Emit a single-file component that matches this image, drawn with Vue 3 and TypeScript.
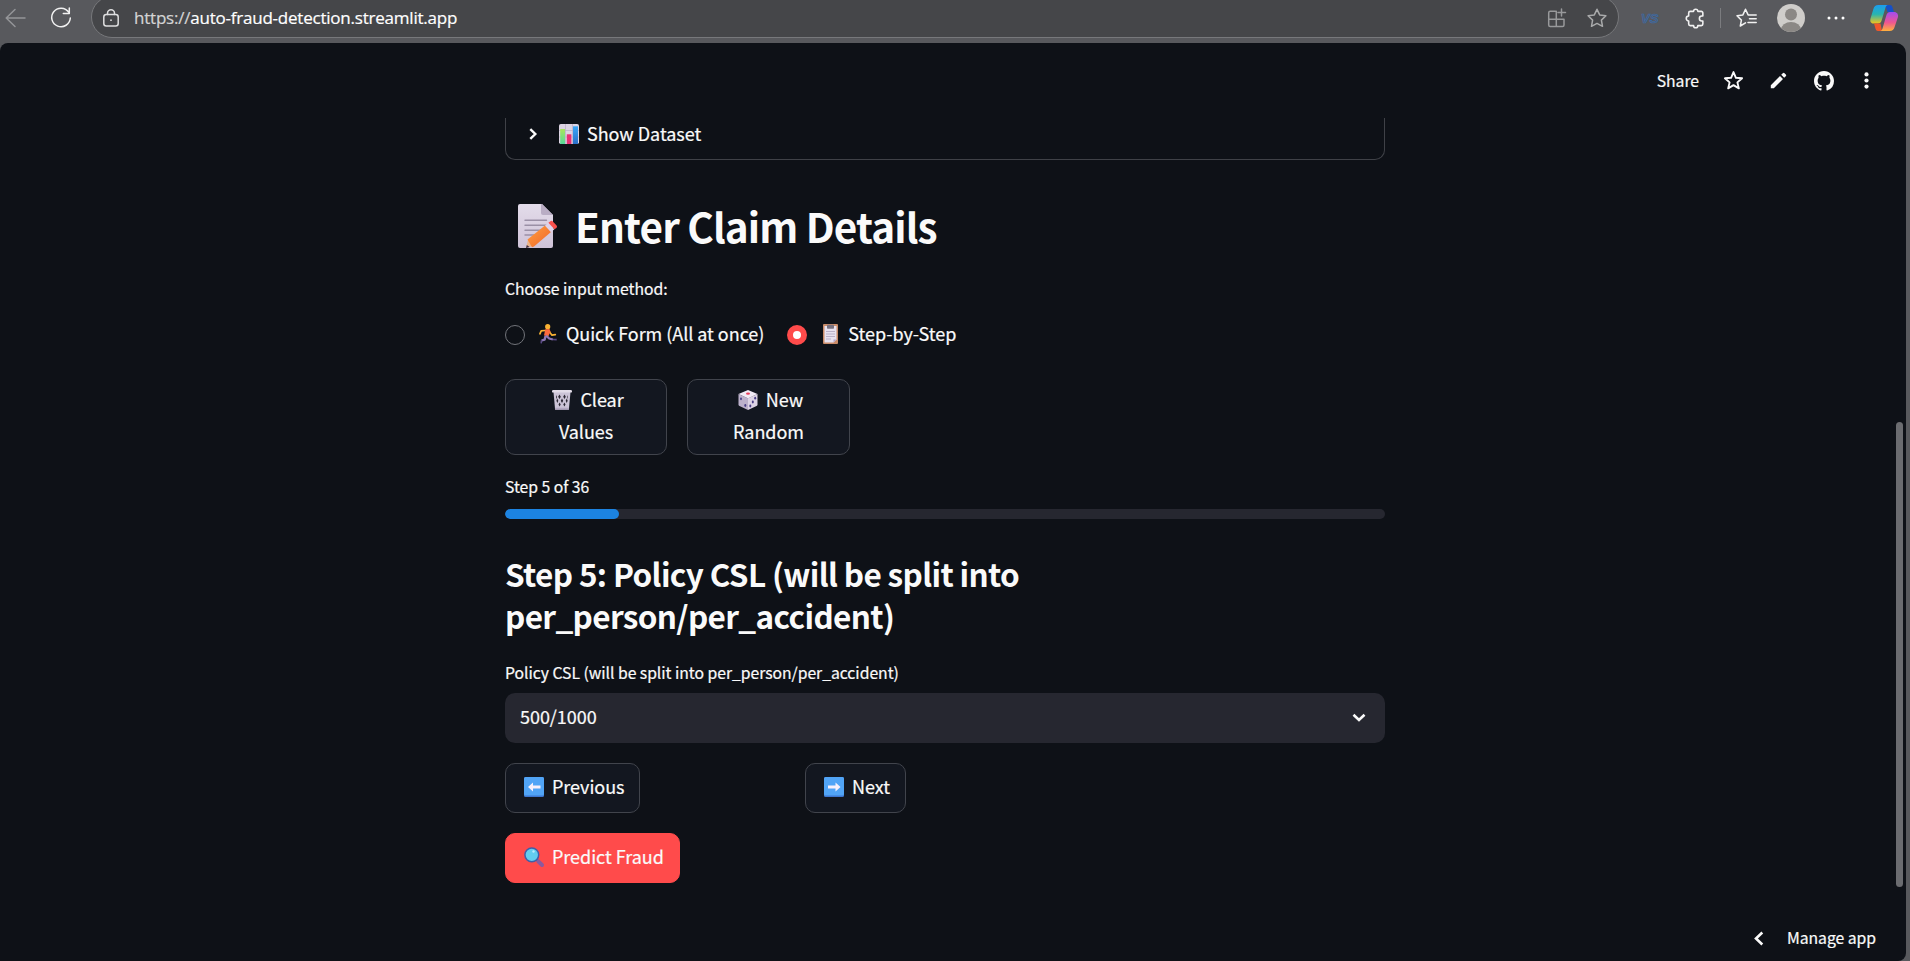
<script setup lang="ts">
import { computed, ref } from 'vue'

const url = 'https://auto-fraud-detection.streamlit.app'
const scheme = url.slice(0, 8)
const host = url.slice(8)

const step = ref(5)
const totalSteps = 36
const fieldLabel = 'Policy CSL (will be split into per_person/per_accident)'
const method = ref<'quick' | 'step'>('step')
const progress = computed(() => `${Math.min(100, step.value * 2.6)}%`)
</script>

<template>
  <div class="browser">
    <div class="toolbar">
      <svg class="back" viewBox="0 0 22 20"><path d="M20 10H1.500M10 1.500 1.200 10 10 18.500" /></svg>
      <svg class="reload" viewBox="0 0 22 22"><path d="M18.700 5.200A9.300 9.300 0 1 0 20.300 11M19.300 1v5.500h-6" /></svg>
      <div class="address">
        <svg class="lock" viewBox="0 0 16 18"><rect x=".8" y="5.500" width="14.400" height="11.500" rx="2.500" /><path d="M4.500 5.500V4.300a3.500 3.500 0 0 1 7 0v1.200" /><circle cx="8" cy="11.200" r=".9" /></svg>
        <span class="url t"><span class="scheme">{{ scheme }}</span>{{ host }}</span>
        <svg class="apps" viewBox="0 0 20 20"><path d="M8.500 3.200H3.200a1.500 1.500 0 0 0-1.500 1.500V17a1.500 1.500 0 0 0 1.500 1.500h12.300A1.500 1.500 0 0 0 17 17v-5.800H1.700M9.300 3.200v15.300M14.500 1v7M11 4.500h7.500" /></svg>
        <svg class="fav" viewBox="0 0 20 20"><path d="m10 1.300 2.700 5.600 6.200.9-4.500 4.300 1.100 6.200-5.500-2.900-5.500 2.900 1.100-6.200L1.100 7.800l6.200-.9z" /></svg>
      </div>
      <span class="vs">VS</span>
      <svg class="puzzle" viewBox="0 0 20 20"><path d="M5 3.200h3.200a2 2 0 0 1 4 0h3.300a1.500 1.500 0 0 1 1.500 1.500v3h-1a2.300 2.300 0 0 0 0 4.600h1v3a1.500 1.500 0 0 1-1.500 1.500h-3.300a2 2 0 0 1-4 0H5a1.500 1.500 0 0 1-1.500-1.500v-3a2.300 2.300 0 0 1 0-4.600v-3A1.500 1.500 0 0 1 5 3.200z" /></svg>
      <i class="rule" />
      <svg class="favs" viewBox="0 0 21 20"><path d="M9.500 14.800 4.300 18l1.100-5.900L1 7.800l5.900-.9L9.500 1.300l2.600 5.600h8.100M13.500 10.800h6.700M12 14.500h8.200" /></svg>
      <svg class="avatar" viewBox="0 0 28 28"><defs><clipPath id="av"><circle cx="14" cy="14" r="14" /></clipPath></defs><g clip-path="url(#av)"><rect width="28" height="28" fill="#cfcdca" /><circle cx="14" cy="10.500" r="6" fill="#8b8885" /><ellipse cx="14" cy="26" rx="10" ry="8" fill="#8b8885" /></g></svg>
      <svg class="more" viewBox="0 0 18 4"><circle cx="2" cy="2" r="1.500" /><circle cx="9" cy="2" r="1.500" /><circle cx="16" cy="2" r="1.500" /></svg>
      <svg class="copilot" viewBox="0 0 28 28">
        <defs>
          <linearGradient id="c1" x1="0" y1="0" x2="0" y2="1"><stop offset="0" stop-color="#1b9df0" /><stop offset=".5" stop-color="#28b5b0" /><stop offset="1" stop-color="#f2c51c" /></linearGradient>
          <linearGradient id="c2" x1="0" y1="0" x2="0" y2="1"><stop offset="0" stop-color="#a24cf0" /><stop offset=".55" stop-color="#ef5692" /><stop offset="1" stop-color="#ffb13c" /></linearGradient>
        </defs>
        <path d="M15 1h5c1.800 0 2.300 1.500 3 4l.9 3h-6.400z" fill="#1550c8" />
        <path d="M8.500 1H18c-1.600 0-2.200 1.500-2.800 3.500l-3.500 11.800c-.7 2.300-1.700 3.200-4 3.200H3.500C.5 19.500-.2 17 .6 14.200L3.400 5C4.200 2.200 5.500 1 8.500 1z" fill="url(#c1)" />
        <path d="M12 27H8c-1.800 0-2.300-1.500-3-4l-1-3.500h6.500z" fill="#f0572a" />
        <path d="M19.500 27H10c1.600 0 2.200-1.500 2.800-3.500l3.500-12c.7-2.300 1.700-3.500 4-3.500H24c3 0 4.700 2.500 3.900 5.300L24.600 23c-.8 2.800-2.100 4-5.100 4z" fill="url(#c2)" />
      </svg>
    </div>

    <div class="page">
      <header class="app-header">
        <span class="share t">Share</span>
        <svg class="h-star" viewBox="0 0 20 20"><path d="m10 2 2.300 5.400 5.900.5-4.500 3.900 1.400 5.700L10 14.400l-5.100 3.100 1.400-5.700-4.500-3.900 5.900-.5z" /></svg>
        <svg class="h-pen" viewBox="0 0 17 17"><path d="M.8 13.200 10 4l3 3-9.200 9.200H.8zM11.200 2.800l1.600-1.600a1.200 1.200 0 0 1 1.700 0l1.300 1.300a1.200 1.200 0 0 1 0 1.700l-1.600 1.600z" /></svg>
        <svg class="h-git" viewBox="0 0 16 16"><path d="M8 0C3.580 0 0 3.580 0 8c0 3.540 2.290 6.530 5.470 7.590.4.070.55-.17.55-.38 0-.19-.01-.82-.01-1.490-2.010.37-2.530-.49-2.690-.94-.09-.23-.48-.94-.82-1.130-.28-.15-.68-.52-.01-.53.63-.01 1.080.58 1.230.82.720 1.210 1.870.87 2.330.66.070-.52.28-.87.510-1.070-1.780-.2-3.640-.89-3.640-3.950 0-.87.310-1.590.82-2.150-.08-.2-.36-1.020.08-2.120 0 0 .67-.21 2.200.82.640-.18 1.320-.27 2-.27s1.360.09 2 .27c1.530-1.040 2.200-.82 2.200-.82.440 1.100.16 1.920.08 2.120.51.56.82 1.270.82 2.150 0 3.070-1.870 3.750-3.650 3.950.29.25.54.73.54 1.480 0 1.070-.01 1.930-.01 2.200 0 .21.150.46.550.38A8.010 8.010 0 0 0 16 8c0-4.420-3.580-8-8-8z" /></svg>
        <svg class="h-dots" viewBox="0 0 5 17"><circle cx="2.500" cy="2.400" r="2.100" /><circle cx="2.500" cy="8.500" r="2.100" /><circle cx="2.500" cy="14.600" r="2.100" /></svg>
      </header>

      <main class="column">
        <div class="expander">
          <svg class="chev-right" viewBox="0 0 8 12"><path d="m1.300 1.200 5 4.800-5 4.800" /></svg>
          <svg class="emoji chart" viewBox="0 0 20 20">
            <defs>
              <linearGradient id="gr" x1="0" y1="0" x2="0" y2="1"><stop offset="0" stop-color="#a8e65a" /><stop offset="1" stop-color="#55d89a" /></linearGradient>
              <linearGradient id="bl" x1="0" y1="0" x2="0" y2="1"><stop offset="0" stop-color="#3aa7f8" /><stop offset="1" stop-color="#2b6fc8" /></linearGradient>
            </defs>
            <rect width="20" height="20" rx="1.800" fill="#dcd4e3" /><path d="M6.500 0v20M13.500 0v20M0 6.500h20M0 13h20" stroke="#b9aec6" stroke-width=".7" />
            <rect x="1.200" y="5" width="4.800" height="15" fill="url(#gr)" /><rect x="7.800" y="10.300" width="4.600" height="9.700" fill="#ea2f74" /><rect x="14" y="2.300" width="5" height="17.700" fill="url(#bl)" />
          </svg>
          <span class="t">Show Dataset</span>
        </div>

        <h2>
          <svg class="emoji memo" viewBox="0 0 40 44">
            <defs>
              <linearGradient id="pg" x1="0" y1="0" x2="0" y2="1"><stop offset="0" stop-color="#e3dcea" /><stop offset="1" stop-color="#cfc3d8" /></linearGradient>
              <linearGradient id="pn" x1="0" y1="0" x2="1" y2="1"><stop offset="0" stop-color="#ffa13f" /><stop offset="1" stop-color="#f0642a" /></linearGradient>
            </defs>
            <path d="M2 0h22l11 11v31a2 2 0 0 1-2 2H2a2 2 0 0 1-2-2V2a2 2 0 0 1 2-2z" fill="url(#pg)" /><path d="M24 0l11 11H25a2 2 0 0 1-2-2V0z" fill="#b9adc4" />
            <path d="M7 16.300h21.500M7 21.200h21.500M7 26.200h18M7 31h10" stroke="#9a90a6" stroke-width="1.400" stroke-linecap="round" />
            <path d="M8 44l2-8.500 6.500 6z" fill="#e9b48c" /><path d="M8 44l.8-3 2.700 2z" fill="#3b2b42" />
            <path d="M9.500 35.500 27 21.500l6 6.500-17 14.500-2 .8z" fill="url(#pn)" /><path d="m27 21.500 3.400-2.700 6 6.500L33 28z" fill="#dfd3ea" /><path d="m30.400 18.800 2-1.500a1.800 1.800 0 0 1 2.400.2l3.800 4a1.700 1.700 0 0 1-.2 2.400l-2 1.400z" fill="#f8504c" />
          </svg>
          <span class="t">Enter Claim Details</span>
        </h2>

        <div class="label method-label"><span class="t">Choose input method:</span></div>
        <div class="radios">
          <label class="radio" @click="method = 'quick'">
            <i class="dot" :class="{ on: method === 'quick' }" />
            <svg class="emoji runner" viewBox="0 0 18 20">
              <circle cx="8.700" cy="2.700" r="2.600" fill="#f9b233" />
              <path d="M6 6.500 2.200 6.800.9 9.800M10.500 8l2.500 3.200 3.300-.5" fill="none" stroke="#f9b233" stroke-width="1.700" stroke-linecap="round" stroke-linejoin="round" />
              <path d="m6.200 5.300 4.300-.2 1 2.500-2.200 5-4.300-1z" fill="#fb6a3c" />
              <path d="m7 11.500 3.200 3 3.700 1M6.500 12l-.8 3.600-3.200.9" fill="none" stroke="#8d78b4" stroke-width="2.300" stroke-linejoin="round" />
              <path d="m2.500 16.300-.3 3M14 15.500l3.700.1" fill="none" stroke="#5a4a86" stroke-width="1.600" />
            </svg>
            <span class="t">Quick Form (All at once)</span>
          </label>
          <label class="radio second" @click="method = 'step'">
            <i class="dot" :class="{ on: method === 'step' }" />
            <svg class="emoji clip" viewBox="0 0 15 20">
              <rect width="15" height="20" rx="1" fill="#c98b68" /><path d="M1.500 2h12v13.500L10.500 18.500h-9z" fill="#e8e2f0" /><path d="M13.500 15.500h-3v3z" fill="#b4a6cb" />
              <path d="M3 7.500h9M3 10h9M3 12.500h9M3 15h5" stroke="#b6abc4" stroke-width=".9" /><rect x="4" y=".7" width="7" height="4" rx=".7" fill="#77717f" />
            </svg>
            <span class="t">Step-by-Step</span>
          </label>
        </div>

        <div class="pair">
          <button class="btn tall">
            <svg class="emoji" viewBox="0 0 20 20">
              <path d="M1.500 2h17l-1.600 17.500H3.100z" fill="#cbc3d6" />
              <path d="m4 5 1 2-1 2.300M7.500 4.500l1.300 2.300-1.300 2.300-1.400-2.300zM12.500 4.500l1.300 2.300-1.300 2.300-1.300-2.300zM16 5l-.8 2 .6 2.300M5.300 8.500l1 2.300-.9 2.200-1-2.200zM10 8.500l1.200 2.300L10 13l-1.200-2.200zM14.700 8.500l1 2.300-1 2.200-1-2.200zM7.600 12.500l1.100 2-1.100 2-1.100-2zM12.400 12.500l1.100 2-1.100 2-1.100-2z" fill="#2b2733" />
              <rect x="0" y="0" width="20" height="2.600" rx="1.200" fill="#e2dce8" /><path d="M2.900 17.700h14.200l-.2 2H3.100z" fill="#b3a8c2" />
            </svg><span class="t">Clear</span><br /><span class="t">Values</span>
          </button>
          <button class="btn tall wide">
            <svg class="emoji" viewBox="0 0 20 20">
              <path d="M10 0l9.500 4L10 8.500.5 4z" fill="#f1eaf5" /><path d="M.5 4 10 8.300V20L1.500 16q-1-.5-1-1.600z" fill="#bcb0cb" /><path d="M19.500 4 10 8.300V20l8.500-4q1-.5 1-1.600z" fill="#ddd3e5" />
              <ellipse cx="10" cy="3.700" rx="2" ry="1.100" fill="#e83f5b" /><g fill="#4a3f86"><ellipse cx="3" cy="8.800" rx="1" ry="1.400" /><ellipse cx="7.300" cy="15.500" rx="1" ry="1.400" /><ellipse cx="17.200" cy="8.200" rx="1" ry="1.400" /><ellipse cx="14.800" cy="12" rx="1" ry="1.400" /><ellipse cx="12.300" cy="16" rx="1" ry="1.400" /></g>
            </svg><span class="t">New</span><br /><span class="t">Random</span>
          </button>
        </div>

        <div class="label step-label"><span class="t">Step {{ step }} of {{ totalSteps }}</span></div>
        <div class="track"><div class="fill" :style="{ width: progress }" /></div>

        <h3><span class="t">Step {{ step }}: Policy CSL (will be split into</span><br /><span class="t">per_person/per_accident)</span></h3>

        <div class="label field-label"><span class="t">{{ fieldLabel }}</span></div>
        <div class="select">
          <span class="t">500/1000</span>
          <svg class="chev-down" viewBox="0 0 14 9"><path d="m1.500 1.700 5.500 5.300 5.500-5.300" /></svg>
        </div>

        <div class="nav">
          <button class="btn prev">
            <svg class="emoji" viewBox="0 0 20 20"><rect width="20" height="20" rx="1.500" fill="#3d77d2" /><rect width="20" height="18.500" rx="1.500" fill="#51a4f6" /><path d="M4 10 9 5.500v3h7.500v3H9v3z" fill="#f7f0fb" /></svg>
            <span class="t">Previous</span>
          </button>
          <button class="btn next">
            <svg class="emoji" viewBox="0 0 20 20"><rect width="20" height="20" rx="1.500" fill="#3d77d2" /><rect width="20" height="18.500" rx="1.500" fill="#51a4f6" /><path d="M16.500 10l-5-4.500v3H4v3h7.500v3z" fill="#f7f0fb" /></svg>
            <span class="t">Next</span>
          </button>
        </div>
        <button class="btn predict">
          <svg class="emoji" viewBox="0 0 20 20"><path d="m12 12 2.500 2.500" stroke="#5a5b9a" stroke-width="2" /><path d="m14.300 14.300 3.700 3.700" stroke="#8c5a9e" stroke-width="4" stroke-linecap="round" /><circle cx="7.800" cy="7.800" r="6.900" fill="#62cdf0" stroke="#3f5fa8" stroke-width="1.500" /><circle cx="9.500" cy="4.500" r="1.200" fill="#b8ecff" /></svg>
          <span class="t">Predict Fraud</span>
        </button>
      </main>

      <div class="manage">
        <svg class="chev-left" viewBox="0 0 10 15"><path d="M8.300 1.500 2 7.500l6.300 6" /></svg>
        <span class="t">Manage app</span>
      </div>
      <i class="scrollbar" />
    </div>
  </div>
</template>

<style>
html,
body {
  background: #58595d;
  overflow: hidden;
}
</style>

<style scoped>
.browser {
  width: 1910px;
  height: 961px;
  display: flex;
  flex-direction: column;
  background: #58595d;
  overflow: hidden;
  color: #fafafa;
  font-family: "Noto Sans CJK SC", "Open Sans", sans-serif;
  font-size: 18px;
}
svg { display: block; flex: none; overflow: visible; }
.t { white-space: nowrap; letter-spacing: -0.040px; -webkit-text-stroke: 0.200px currentColor; }

.toolbar {
  height: 43px;
  flex: none;
  display: flex;
  align-items: center;
  padding: 0 8px 7px 5px;
  box-sizing: border-box;
}
.toolbar svg { fill: none; stroke: #f1f1f1; stroke-width: 1.500; stroke-linejoin: round; stroke-linecap: round; }
.toolbar .back { width: 22px; height: 20px; stroke: #949598; }
.toolbar .reload { width: 22px; height: 22px; margin-left: 23px; }
.address {
  width: 1528px;
  height: 42px;
  margin: -3px 0 0 19px;
  box-sizing: border-box;
  border: 1.500px solid #77787b;
  border-radius: 21px;
  background: #454649;
  display: flex;
  align-items: center;
  padding: 2px 11.500px 0 11px;
}
.address .lock { width: 16px; height: 18px; stroke: #dededf; }
.address .lock circle { fill: #dededf; stroke: none; }
.url {
  margin-left: 15px;
  flex: 1;
  font-family: "Open Sans", "Noto Sans", sans-serif;
  font-size: 17px;
  letter-spacing: -0.220px;
  color: #fff;
}
.scheme { color: #d4d4d5; }
.address .apps { width: 20px; height: 20px; stroke: #98999b; margin-right: 20px; }
.address .fav { width: 20px; height: 20px; stroke: #a9aaab; }
.vs {
  width: 18px;
  margin-left: 22px;
  font: italic bold 13px "Liberation Sans", sans-serif;
  color: #54606f;
  -webkit-text-stroke: 0.700px #3a69a8;
}
.puzzle { width: 21px; height: 21px; margin-left: 26px; }
.rule { width: 1px; height: 20px; background: #7b7c7f; margin-left: 14px; }
.favs { width: 21px; height: 20px; margin-left: 15px; }
.toolbar .avatar { width: 28px; height: 28px; margin-left: 20px; stroke: none; }
.toolbar .more { width: 18px; height: 4px; margin-left: 22px; fill: #fff; stroke: none; }
.toolbar .copilot { width: 28px; height: 28px; margin-left: 25px; stroke: none; }

.page {
  position: relative;
  width: 1906px;
  flex: 1;
  min-height: 0;
  background: #0e1117;
  border-radius: 8px 10px 8px 0;
}
.app-header {
  height: 75px;
  box-sizing: border-box;
  display: flex;
  align-items: center;
  justify-content: flex-end;
  padding: 0 37px 0 0;
}
.app-header svg { fill: #fafafa; }
.share { font-size: 15.750px; line-height: 20px; padding-top: 1px; }
.app-header .h-star { width: 21px; height: 21px; margin-left: 24px; fill: none; stroke: #fafafa; stroke-width: 1.800; stroke-linejoin: round; }
.h-pen { width: 17px; height: 17px; margin-left: 26px; }
.h-git { width: 20px; height: 20px; margin-left: 27px; }
.h-dots { width: 5px; height: 17px; margin-left: 30px; }

.column {
  width: 880px;
  margin-left: 505px;
  display: flex;
  flex-direction: column;
  align-items: flex-start;
}
.expander {
  width: 880px;
  height: 42px;
  box-sizing: border-box;
  border: 1px solid #3f4147;
  border-top: 0;
  border-radius: 0 0 10px 10px;
  display: flex;
  align-items: center;
  padding: 0 0 10px 23px;
}
.expander .t { padding-bottom: 1px; }
.chev-right { width: 8px; height: 12px; fill: none; stroke: #fafafa; stroke-width: 2.400; }
.emoji { width: 20px; height: 20px; }
.chart { margin: 0 8px 0 22px; }
h2 {
  margin: 39px 0 0;
  height: 54px;
  display: flex;
  align-items: center;
  font-size: 40.500px;
  line-height: 54px;
  font-weight: 700;
  padding-left: 13px;
}
h2 .t { letter-spacing: -0.880px; -webkit-text-stroke: 0; }
h3 .t { letter-spacing: -0.640px; -webkit-text-stroke: 0; }
.memo { width: 40px; height: 44px; margin-right: 17px; }
.label { height: 26px; line-height: 26px; font-size: 15.750px; }
.method-label { margin-top: 23px; }
.radios { margin-top: 18px; height: 30px; display: flex; }
.radio { display: flex; align-items: center; }
.radio .t { line-height: 30px; padding-bottom: 5px; }
.dot {
  width: 20px;
  height: 20px;
  box-sizing: border-box;
  border: 1.500px solid #72747a;
  border-radius: 50%;
}
.dot.on { border: 6.500px solid #ff4b4b; background: #fff; }
.runner { width: 18px; margin: 0 9px 2px 14px; }
.clip { width: 15px; margin: 0 10px 2px 16px; }
.second { margin-left: 23px; }

.btn {
  box-sizing: border-box;
  border: 1px solid #41444c;
  border-radius: 10px;
  background: #131720;
  color: #fafafa;
  font: inherit;
  height: 50px;
  display: flex;
  align-items: center;
  padding: 0 0 2px 18px;
}
.btn .t { margin-left: 8px; padding-bottom: 3px; }
.pair { margin-top: 29px; display: flex; gap: 20px; }
.tall {
  width: 162px;
  height: 76px;
  display: flow-root;
  text-align: center;
  line-height: 32px;
  padding: 0 0 4px;
}
.wide { width: 163px; }
.tall .emoji { display: inline-block; vertical-align: -3px; margin-left: 4px; }
.tall br + .t { margin-left: 0; }
.step-label { margin-top: 19px; }
.track { margin-top: 9px; width: 880px; height: 10px; border-radius: 5px; background: #262730; overflow: hidden; }
.fill { height: 10px; border-radius: 5px; background: #1c83e1; }
h3 { margin: 33px 0 0; font-size: 31.500px; line-height: 42px; font-weight: 700; }
.field-label { margin-top: 24px; }
.select {
  margin-top: 7px;
  width: 880px;
  height: 50px;
  box-sizing: border-box;
  border-radius: 10px;
  background: #262730;
  display: flex;
  align-items: center;
  justify-content: space-between;
  padding: 0 19px 1px 15px;
}
.select .t { padding-bottom: 4px; }
.chev-down { width: 14px; height: 9px; fill: none; stroke: #fafafa; stroke-width: 2.600; }
.nav { margin-top: 20px; display: flex; }
.prev { width: 135px; }
.next { width: 101px; margin-left: 165px; }
.predict { width: 175px; margin-top: 20px; background: #ff4b4b; border-color: #ff4b4b; }
.manage {
  position: absolute;
  right: 30px;
  bottom: 12px;
  height: 22px;
  display: flex;
  align-items: center;
  font-size: 15.750px;
  line-height: 22px;
}
.chev-left { width: 10px; height: 15px; margin-right: 23px; fill: none; stroke: #fafafa; stroke-width: 2.600; }
.scrollbar { position: absolute; left: 1896px; top: 379px; width: 7px; height: 465px; border-radius: 4px; background: #6b6c70; }
</style>
